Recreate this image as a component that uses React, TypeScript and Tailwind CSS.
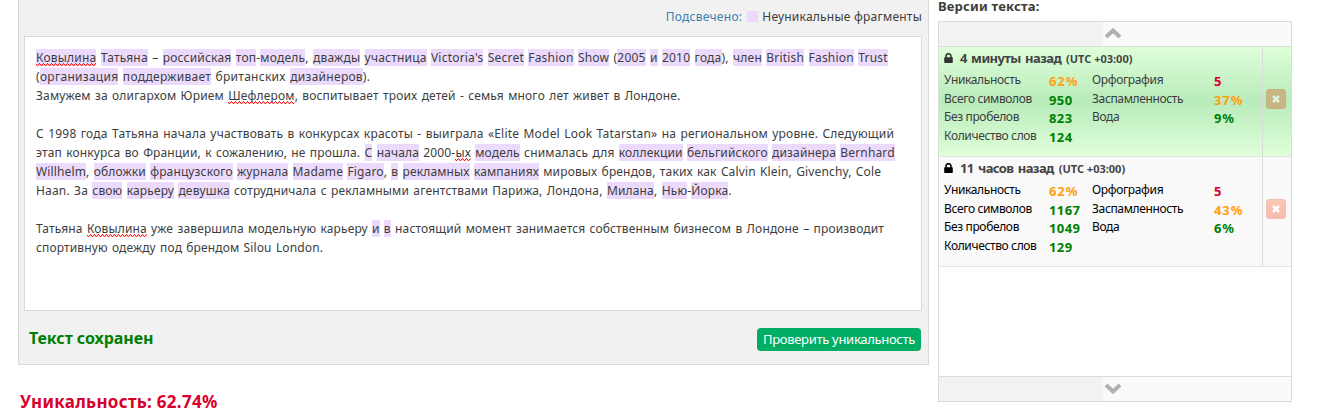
import React from "react";

type Line = { text: string; cls: string };

// [word] = non-unique fragment, {word} = spelling mark
const lines: Line[] = [
  { text: "[{Ковылина}] [Татьяна] – [российская] [топ]-[модель], [дважды] [участница] [Victoria's] [Secret] [Fashion] [Show] ([2005] [и] [2010] [года]), [член] [British] [Fashion] [Trust]", cls: "tracking-[0.206px]" },
  { text: "([организация] [поддерживает] британских [дизайнеров]).", cls: "tracking-[0.285px]" },
  { text: "Замужем за олигархом Юрием {Шефлером}, воспитывает троих детей - семья много лет живет в Лондоне.", cls: "tracking-[0.155px]" },
  { text: "", cls: "" },
  { text: "С 1998 года Татьяна начала участвовать в конкурсах красоты - выиграла «Elite Model Look Tatarstan» на региональном уровне. Следующий", cls: "tracking-[0.2px]" },
  { text: "этап конкурса во Франции, к сожалению, не прошла. [С] [начала] 2000-{ых} [модель] снималась для [коллекции] [бельгийского] [дизайнера] [Bernhard]", cls: "tracking-[0.15px]" },
  { text: "[Willhelm], [обложки] [французского] [журнала] [Madame] [Figaro], [в] [рекламных] [кампаниях] мировых брендов, таких как Calvin Klein, Givenchy, Cole", cls: "tracking-[0.142px]" },
  { text: "Haan. За [свою] [карьеру] [девушка] сотрудничала с рекламными агентствами Парижа, Лондона, [Милана], [Нью]-[Йорка].", cls: "tracking-[0.165px]" },
  { text: "", cls: "" },
  { text: "Татьяна {Ковылина} уже завершила модельную карьеру [и] [в] настоящий момент занимается собственным бизнесом в Лондоне – производит", cls: "tracking-[0.145px]" },
  { text: "спортивную одежду под брендом Silou London.", cls: "tracking-[0.13px]" },
];

function rich(text: string): React.ReactNode[] {
  return text.split(/(\[[^\]]*\]|\{[^}]*\})/).map((part, i) => {
    if (part.startsWith("[")) return <span key={i} className="bg-[#ecdafd]">{rich(part.slice(1, -1))}</span>;
    if (part.startsWith("{"))
      return (
        <span key={i} className="relative">
          {part.slice(1, -1)}
          <svg className="absolute bottom-0 left-0 h-[3px] w-full">
            <rect width="100%" height="3" fill="url(#squiggle)" />
          </svg>
        </span>
      );
    return <React.Fragment key={i}>{part}</React.Fragment>;
  });
}

type Stat = [string, string, string];
const green = "text-[#008000]";
const orange = "text-[#ffa012]";
const red = "text-[#d9002b]";

function Stats({ rows, labelCls }: { rows: Stat[]; labelCls: string }) {
  return (
    <>
      {rows.map(([label, value, color]) => (
        <div key={label} className="flex h-[18.6px] items-start">
          <span className={`grow text-[12px] leading-[18px] tracking-[-0.36px] ${labelCls}`}>{label}</span>
          <span className={`w-[43px] pt-[1px] text-[13px] leading-[18px] font-bold ${value.endsWith("%") ? "tracking-[0.9px]" : "tracking-[0.4px]"} ${color}`}>{value}</span>
        </div>
      ))}
    </>
  );
}

function Version({ active, title, left, right }: { active?: boolean; title: string; left: Stat[]; right: Stat[] }) {
  const label = active ? "text-[#3d3d3d]" : "text-black";
  return (
    <div className={`flex h-[110px] border-b border-[#e3e3e3] ${active ? "bg-[linear-gradient(#dfffd9,#b8ebbb_50%,#dfffd9)]" : "bg-[#f9f9f9]"}`}>
      <div className="w-[324px] shrink-0 border-r border-[#dbdbdb] pl-[5px]">
        <div className="flex h-[24px] items-center text-[#444]">
          <svg width="9" height="10" viewBox="0 0 9 10" className={`-translate-y-px ${active ? "text-[#333]" : "text-black"}`}>
            <path d="M2 5V3a2.5 2.3 0 0 1 5 0v2" fill="none" stroke="currentColor" strokeWidth="1.5" />
            <rect x="0.2" y="4.2" width="8.6" height="5.8" rx="0.7" fill="currentColor" />
          </svg>
          <span className="ml-[7px] text-[13px] font-bold tracking-[-0.6px] [word-spacing:1.5px]">{title}</span>
          <span className="ml-[5px] text-[11px] font-bold">(UTC +03:00)</span>
        </div>
        <div className="flex">
          <div className="w-[148px]"><Stats rows={left} labelCls={label} /></div>
          <div className="w-[165px]"><Stats rows={right} labelCls={label} /></div>
        </div>
      </div>
      <div className="flex grow items-center justify-center pr-[2px] pb-[6px]">
        <div className={`flex size-[20px] items-center justify-center rounded-[3px] border ${active ? "border-[#c9b27c] bg-[#c8b586]" : "border-[#f4bfae] bg-[linear-gradient(#fac8b3,#f3bcb1)]"}`}>
          <svg width="8" height="8" viewBox="0 0 8 8">
            <path d="M1 1l6 6M7 1l-6 6" stroke={active ? "#dff3d8" : "#fff"} strokeWidth="2.6" />
          </svg>
        </div>
      </div>
    </div>
  );
}

function Scroll({ down }: { down?: boolean }) {
  return (
    <div className={`flex h-[25px] shrink-0 items-center justify-center border-[#dbdbdb] bg-[linear-gradient(90deg,#f2f2f2_46%,#fafafa_47%)] pr-[4px] ${down ? "border-t" : "border-b"}`}>
      <svg width="18" height="12" viewBox="0 0 18 12" className={down ? "rotate-180" : "-translate-y-px"}>
        <path d="M2 10l7-6.5 7 6.5" fill="none" stroke="#b0b0b0" strokeWidth="4" />
      </svg>
    </div>
  );
}

export default function App() {
  return (
    <div className="flex h-[418px] w-[1321px] items-start overflow-hidden bg-white font-['Noto_Sans',sans-serif] text-[12px] whitespace-nowrap text-[#3d3d3d]">
      <svg width="0" height="0" className="absolute">
        <pattern id="squiggle" width="4" height="3" patternUnits="userSpaceOnUse">
          <path d="M0 1h1v1h-1zM1 2h1v1h-1zM2 1h1v1h-1zM3 0h1v1h-1z" fill="#ff2020" />
          <path d="M0 2h1v1h-1zM2 2h1v1h-1zM3 1h1v1h-1z" fill="#ff2020" fillOpacity="0.35" />
        </pattern>
      </svg>
      <div className="ml-[18px] w-[911px]">
        <div className="h-[365px] border-x border-b border-[#d9d9d9] bg-[#f1f1f1] pr-[6px] pl-[5px]">
          <div className="flex h-[36px] items-center justify-end pb-[3px]">
            <span className="tracking-[0.27px] text-[#3a80ad]">Подсвечено:</span>
            <span className="mr-[4px] ml-[5px] size-[11px] bg-[#ecdafd]" />
            <span className="tracking-[0.23px]">Неуникальные фрагменты</span>
          </div>
          <div className="h-[275px] border border-[#d9d9d9] bg-white pt-[11px] pl-[11px] text-[12px] leading-[19px] [word-spacing:1px]">
            {lines.map((l, i) => (
              <div key={i} className="h-[19px]"><span className={l.cls}>{rich(l.text)}</span></div>
            ))}
          </div>
          <div className="flex h-[53px] items-center justify-between pr-px pl-[5px]">
            <span className="text-[16px] font-bold tracking-[-0.05px] text-[#008000]">Текст сохранен</span>
            <button className="mt-[4px] h-[23px] w-[164px] rounded-[4px] bg-[#00ad65] text-[13px] leading-[23px] tracking-[-0.3px] text-white">Проверить уникальность</button>
          </div>
        </div>
        <div className="mt-[25px] ml-[2px] text-[17px] leading-[24px] font-bold tracking-[0.3px] text-[#d9002b]">Уникальность: 62.74%</div>
      </div>
      <div className="ml-[9px] w-[354px]">
        <div className="h-[21px] text-[13px] leading-[13px] font-bold tracking-[0.2px]">Версии текста:</div>
        <div className="flex h-[381px] flex-col border border-[#dbdbdb] bg-white">
          <Scroll />
          <Version
            active
            title="4 минуты назад"
            left={[["Уникальность", "62%", orange], ["Всего символов", "950", green], ["Без пробелов", "823", green], ["Количество слов", "124", green]]}
            right={[["Орфография", "5", red], ["Заспамленность", "37%", orange], ["Вода", "9%", green]]}
          />
          <Version
            title="11 часов назад"
            left={[["Уникальность", "62%", orange], ["Всего символов", "1167", green], ["Без пробелов", "1049", green], ["Количество слов", "129", green]]}
            right={[["Орфография", "5", red], ["Заспамленность", "43%", orange], ["Вода", "6%", green]]}
          />
          <div className="grow" />
          <Scroll down />
        </div>
      </div>
    </div>
  );
}
